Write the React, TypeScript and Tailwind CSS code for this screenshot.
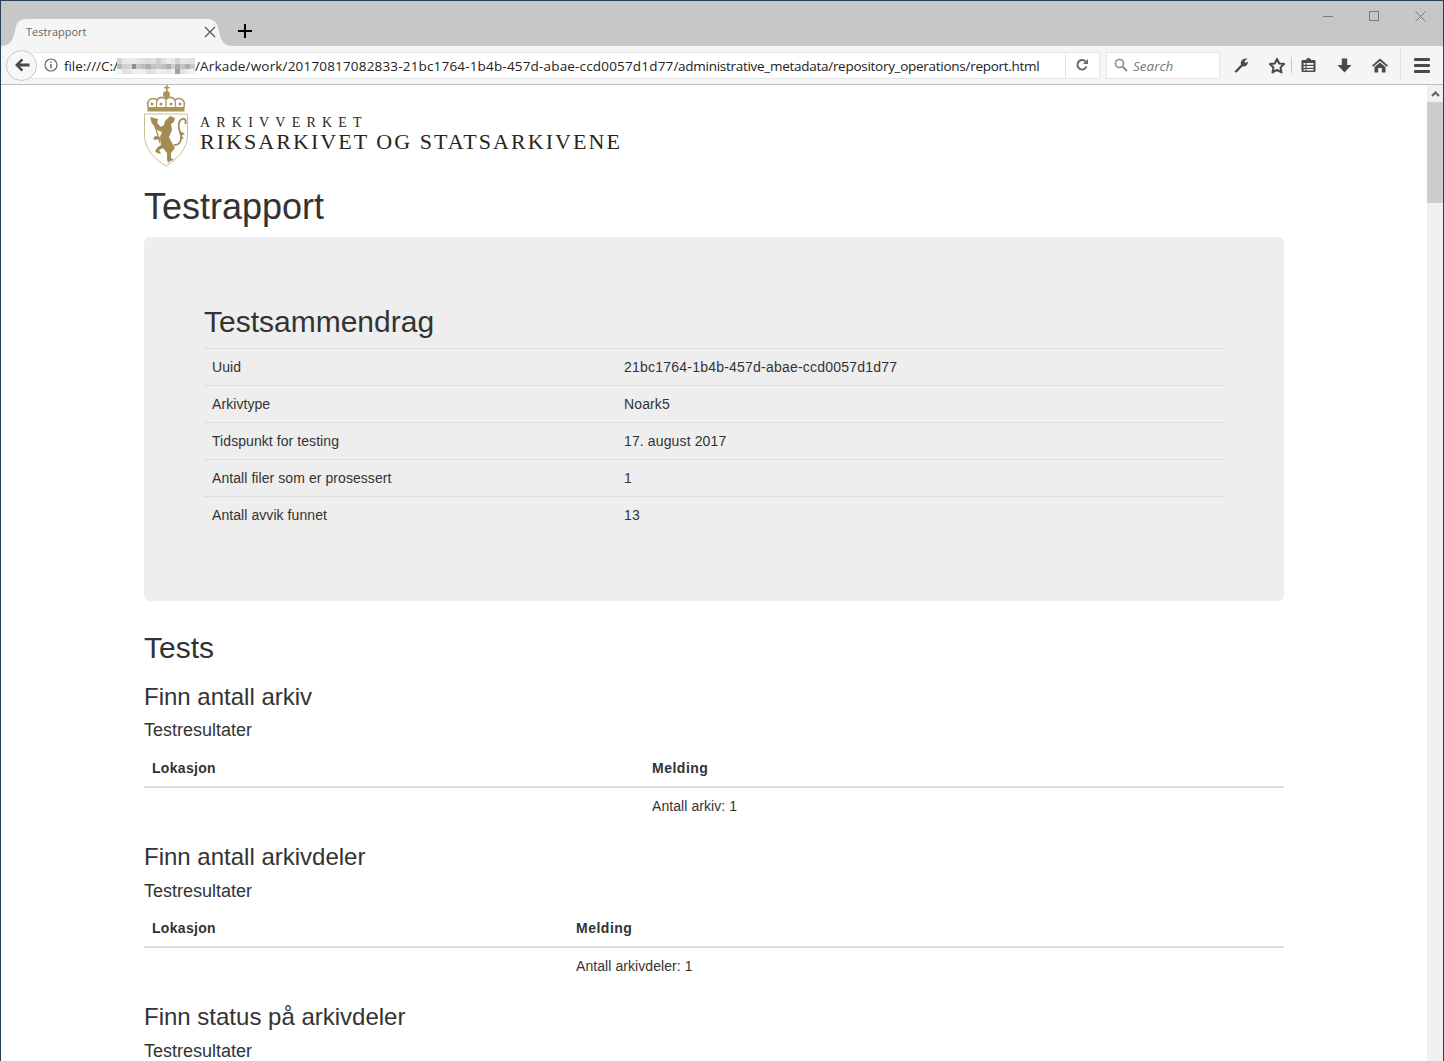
const sans = "font-['Liberation_Sans',Arial,sans-serif]";

// pixelated patch over the user name in the url
const blurBlocks = [
  "#cfd4d8", "#e8e8e8", "#ebe8e5", "#ecebe9", "#e4e4e4", "#dfe0e0", "#e0dcd9", "#e3e0de", "#c9d2d6", "#dfe2e4", "#eceeee", "#e6e8ea", "#d2d6da", "#e8e8e8", "#e4e4e4", "#dfe2e4",
  "#b5bbc0", "#d0d0d0", "#d6d4d2", "#8c9096", "#c9c6c4", "#bcbcbc", "#a8adb3", "#c5c2c0", "#c5c9cc", "#bfc1c4", "#b8ada6", "#cfd0d2", "#a9adb2", "#c6c2bf", "#b3aba6", "#c8ccd0",
  "#f4f4f4", "#e2e2de", "#e4e3e0", "#f0f0f0", "#eeeeee", "#ecedee", "#dcdcdc", "#e4e2e0", "#f0f0f0", "#ebeced", "#e8e6e4", "#eeeeee", "#9aa2a8", "#dfe0e0", "#ececec", "#f2f2f2",
];

const summary = [
  ["Uuid", "21bc1764-1b4b-457d-abae-ccd0057d1d77"],
  ["Arkivtype", "Noark5"],
  ["Tidspunkt for testing", "17. august 2017"],
  ["Antall filer som er prosessert", "1"],
  ["Antall avvik funnet", "13"],
];

const Crest = () => (
  <svg width="45" height="82" viewBox="0 0 45 82" className="shrink-0">
    <g fill="none" stroke="#a8935b">
      <path d="M4 22C2 14 9 12 13 15 16 11 19 12 22 14 25 12 28 11 31 15 35 12 42 14 40 22" strokeWidth="1.600" />
      <path d="M13 15L12 25M22 14V25M31 15L32 25" strokeWidth="1.200" />
    </g>
    <g fill="#a8935b">
      <rect x="22" y="0" width="1.600" height="7" />
      <rect x="20" y="2" width="5.600" height="1.400" />
      <circle cx="22.500" cy="9.500" r="3.400" />
      <rect x="3.500" y="22" width="37" height="4.500" />
      <circle cx="8" cy="19" r="1.500" />
      <circle cx="17" cy="19" r="1.500" />
      <circle cx="27" cy="19" r="1.500" />
      <circle cx="36" cy="19" r="1.500" />
    </g>
    <path d="M0.500 29H43.500V50C43.500 65 32 75 22 81 12 75 0.500 65 0.500 50Z" fill="#fff" stroke="#c9bd98" strokeWidth="1" />
    <g fill="#a38c52">
      <path d="M6 32L14 34 13 39 8 39z" />
      <path d="M23 34L26 31 31 33 30 37 27 39 28 45 25 52 28 58 31 63 27 68 27 73 30 75 26 76 24 78 23 74 23 68 19 63 15 65 17 69 13 68 11 66 14 62 17 60 16 52 18 47 15 46 11 43 9 39 13 38 17 42 20 40 21 36Z" />
      <path d="M16 52L11 51 9 54 12 55 14 54 17 55z" />
    </g>
    <path d="M10 37L16 58" stroke="#a38c52" strokeWidth="1.300" />
    <path d="M30 60C38 60 38 52 36 47 34 42 34 36 38 34 41 33 43 36 41 39" fill="none" stroke="#a38c52" strokeWidth="1.800" />
    <path d="M36 46L41 49 37 51 40 53 36 55z" fill="#a38c52" />
  </svg>
);

const ReportTable = ({ first, message }: { first: string; message: string }) => (
  <table className="w-full mb-5">
    <thead>
      <tr className="border-b-2 border-[#dddddd] text-left">
        <th className={`${first} p-2 leading-5 font-bold tracking-[0.3px]`}>Lokasjon</th>
        <th className="p-2 leading-5 font-bold tracking-[0.5px]">Melding</th>
      </tr>
    </thead>
    <tbody>
      <tr>
        <td className="p-2 leading-5"></td>
        <td className="p-2 leading-5 tracking-[0.07px]">{message}</td>
      </tr>
    </tbody>
  </table>
);

const ResultsHeading = () => (
  <h4 className="text-lg leading-[19.8px] mt-[11.350px] mb-[8.650px]">Testresultater</h4>
);

const TestSection = ({ title, first, message }: { title: string; first: string; message: string }) => (
  <section>
    <h3 className="text-2xl leading-[26.4px] mt-5 mb-0">{title}</h3>
    <ResultsHeading />
    <ReportTable first={first} message={message} />
  </section>
);

const Toolbar = () => (
  <div className="h-[39px] shrink-0 bg-[#f5f5f5] border-b border-[#bdbdbd] flex items-center pl-[5px] relative font-['Open_Sans',sans-serif]">
    <div className="w-[31px] h-[31px] rounded-full bg-[#f7f7f7] border border-[#c9c9c9] flex items-center justify-center z-10 shrink-0">
      <svg width="16" height="14" viewBox="0 0 16 14">
        <path d="M7.500 0.500L1 7l6.500 6.500 1.800-1.800L6 8.500h9.500v-3H6l3.300-3.200z" fill="#4a4a4a" />
      </svg>
    </div>
    <div className="h-[27px] w-[1078px] -ml-[15px] bg-white border border-[#e6e6e6] flex items-center pl-[21px] shrink-0">
      <svg width="14" height="14" viewBox="0 0 14 14" className="shrink-0">
        <circle cx="7" cy="7" r="6" fill="none" stroke="#666" strokeWidth="1.200" />
        <rect x="6.300" y="6" width="1.400" height="4.500" fill="#666" />
        <rect x="6.300" y="3.400" width="1.400" height="1.500" fill="#666" />
      </svg>
      <span className="ml-[6px] pt-[4px] text-[13.500px] text-[#222] whitespace-nowrap tracking-[-0.04px]">file:///C:/</span>
      <div className="grid grid-cols-[repeat(16,1fr)] grid-rows-[6px_5px_5px] w-[78px] h-4 -ml-[1px] mt-[1px] shrink-0">
        {blurBlocks.map((c, i) => (
          <div key={i} style={{ backgroundColor: c }} />
        ))}
      </div>
      <span className="pt-[4px] text-[13.500px] text-[#222] whitespace-nowrap">
        <span className="tracking-[0.175px]">/Arkade/work/20170817082833-21bc1764-1b4b-457d-abae-ccd0057d1d77</span>
        <span className="tracking-[-0.28px]">/administrative_metadata/repository_operations/report.html</span>
      </span>
      <div className="ml-auto h-[23px] w-[34px] pr-[2px] border-l border-[#e3e3e3] flex items-center justify-center shrink-0">
        <svg width="14" height="14" viewBox="0 0 14 14" fill="none">
          <path d="M11.500 8.500A4.700 4.700 0 1 1 10.500 3.500" stroke="#6a6a6a" strokeWidth="2" />
          <path d="M8 6h5V1z" fill="#6a6a6a" />
        </svg>
      </div>
    </div>
    <div className="h-[27px] w-[114px] ml-[6px] bg-white border border-[#e6e6e6] flex items-center pl-[7px] gap-[5px] shrink-0">
      <svg width="14" height="14" viewBox="0 0 14 14" fill="none">
        <circle cx="5.500" cy="5.500" r="4" stroke="#8c8c8c" strokeWidth="1.600" />
        <path d="M8.500 8.500L13 13" stroke="#8c8c8c" strokeWidth="2" />
      </svg>
      <span className="pt-[3px] text-[13.500px] italic text-[#777]">Search</span>
    </div>
    <div className="flex-1 flex items-center relative h-full">
      <svg width="16" height="16" viewBox="0 0 16 16" className="ml-[13px] shrink-0">
        <path d="M1.500 14.500L8 7.500C7 4 10 0.800 14.500 1.500L11.500 4.300 12.500 6 15 4.500C15 8.500 12 10 9.500 9.300L3.500 15.800z" fill="#4a4a4a" />
      </svg>
      <svg width="18" height="17" viewBox="0 0 18 17" className="ml-[19px] shrink-0">
        <path d="M9 2l2.200 4.500 4.900.6-3.600 3.400 1 4.900L9 12.900 4.500 15.400l1-4.900L1.900 7.100l4.900-.6z" fill="none" stroke="#4a4a4a" strokeWidth="2" strokeLinejoin="round" />
      </svg>
      <div className="w-px h-4 bg-[#c9c9c9] ml-[5px] shrink-0" />
      <svg width="15" height="16" viewBox="0 0 15 16" className="ml-[9px] shrink-0">
        <path d="M1.500 3H5a2.500 2 0 0 1 5 0h3.500A1 1 0 0 1 14.500 4v10a1 1 0 0 1-1 1h-12a1 1 0 0 1-1-1V4a1 1 0 0 1 1-1z" fill="#4a4a4a" />
        <rect x="2.500" y="6" width="2" height="1.800" fill="#f5f5f5" />
        <rect x="5.500" y="6" width="7" height="1.800" fill="#f5f5f5" />
        <rect x="2.500" y="9" width="2" height="1.800" fill="#f5f5f5" />
        <rect x="5.500" y="9" width="7" height="1.800" fill="#f5f5f5" />
        <rect x="2.500" y="12" width="2" height="1.500" fill="#f5f5f5" />
        <rect x="5.500" y="12" width="7" height="1.500" fill="#f5f5f5" />
      </svg>
      <svg width="15" height="15" viewBox="0 0 15 15" className="ml-[21px] shrink-0">
        <path d="M4.800 0.500h5.400V7H14.500L7.500 14.500.5 7h4.300z" fill="#4a4a4a" />
      </svg>
      <svg width="16" height="15" viewBox="0 0 16 15" className="ml-[20px] shrink-0">
        <path d="M8 0.500L16 7.500 14.800 8.700 8 3 1.200 8.700 0 7.500z" fill="#4a4a4a" />
        <path d="M8 4.500L13.500 9v5.500H9.800V10H6.200v4.500H2.500V9z" fill="#4a4a4a" />
      </svg>
      <div className="w-px h-[32px] bg-[#e2e2e2] ml-[12px] shrink-0" />
      <div className="ml-[13px] flex flex-col gap-[3px] shrink-0">
        <div className="w-4 h-[3px] bg-[#4a4a4a] rounded-[1px]" />
        <div className="w-4 h-[3px] bg-[#4a4a4a] rounded-[1px]" />
        <div className="w-4 h-[3px] bg-[#4a4a4a] rounded-[1px]" />
      </div>
    </div>
  </div>
);

const TitleBar = () => (
  <div className="h-[45px] shrink-0 bg-[#c7c7c7] flex items-end relative">
    <div className="relative w-[232px] h-[27px] flex items-center pl-[25px] pb-[2px] font-['Open_Sans',sans-serif]">
      <svg width="232" height="27" viewBox="0 0 232 27" className="absolute left-0 top-0">
        <path d="M0 27C8 27 12 22 14 12 15 4 18 0 26 0H206C214 0 216 4 218 12 220 22 223 27 232 27Z" fill="#f5f5f5" />
      </svg>
      <span className="relative text-[11px] text-[#666]">Testrapport</span>
      <svg width="12" height="12" viewBox="0 0 12 12" className="absolute left-[203px] top-[7px]">
        <path d="M1 1l10 10M11 1L1 11" stroke="#555" strokeWidth="1.200" />
      </svg>
    </div>
    <svg width="14" height="14" viewBox="0 0 14 14" className="ml-[5px] mb-[8px]">
      <path d="M6 0h2v6h6v2H8v6H6V8H0V6h6z" fill="#000" />
    </svg>
    <div className="absolute top-0 right-0 h-[30px] flex items-center">
      <div className="w-[46px] flex justify-center">
        <div className="w-[10px] h-px bg-[#7a7a7a]" />
      </div>
      <div className="w-[46px] flex justify-center">
        <div className="w-[10px] h-[10px] border border-[#7a7a7a]" />
      </div>
      <div className="w-[46px] flex justify-center">
        <svg width="11" height="11" viewBox="0 0 11 11">
          <path d="M0.500 0.500l10 10M10.500 0.500l-10 10" stroke="#7a7a7a" strokeWidth="1" />
        </svg>
      </div>
    </div>
  </div>
);

const Scrollbar = () => (
  <div className="w-[16px] shrink-0 bg-[#f0f0f0] flex flex-col">
    <div className="h-[17px] flex items-center justify-center shrink-0">
      <svg width="9" height="6" viewBox="0 0 9 6">
        <path d="M1 5l3.500-3.500L8 5" fill="none" stroke="#606060" strokeWidth="2" />
      </svg>
    </div>
    <div className="h-[101px] bg-[#cdcdcd] shrink-0" />
  </div>
);

export default function App() {
  return (
    <div className={`w-[1444px] h-[1061px] overflow-hidden bg-white border border-b-0 border-[#2b3f55] flex flex-col text-sm text-[#333333] ${sans}`}>
      <TitleBar />
      <Toolbar />
      <div className="flex-1 flex min-h-0 overflow-hidden">
        <main className="flex-1 pl-[143px] pr-[143px] min-w-0">
          <div className="flex items-start h-[82px]">
            <Crest />
            <div className="ml-[11px] mt-[30px] font-['Liberation_Serif',serif] text-[#2a2519] whitespace-nowrap">
              <div className="text-[14px] leading-[16px] tracking-[6.200px]">ARKIVVERKET</div>
              <div className="text-[22px] leading-[21px] tracking-[2.050px]">RIKSARKIVET OG STATSARKIVENE</div>
            </div>
          </div>
          <h1 className="text-4xl leading-[39.6px] mt-5 mb-2.5">Testrapport</h1>
          <div className="bg-[#eeeeee] rounded-md px-[60px] py-12 mb-[30px]">
            <h2 className="text-3xl leading-[33px] mt-5 mb-2.5">Testsammendrag</h2>
            <table className="w-full mb-5">
              <tbody>
                {summary.map(([label, value], i) => (
                  <tr key={label} className="border-t border-[#dddddd]">
                    <td className="w-[412px] p-2 leading-5 tracking-[0.07px]">{label}</td>
                    <td className={i === 0 ? "p-2 leading-5 tracking-[0.22px]" : "p-2 leading-5 tracking-[0.13px]"}>{value}</td>
                  </tr>
                ))}
              </tbody>
            </table>
          </div>
          <h2 className="text-3xl leading-[33px] mb-2.5">Tests</h2>
          <TestSection title="Finn antall arkiv" first="w-[500px]" message="Antall arkiv: 1" />
          <TestSection title="Finn antall arkivdeler" first="w-[424px]" message="Antall arkivdeler: 1" />
          <section>
            <h3 className="text-2xl leading-[26.4px] mt-5 mb-0">Finn status på arkivdeler</h3>
            <ResultsHeading />
          </section>
        </main>
        <Scrollbar />
      </div>
    </div>
  );
}
